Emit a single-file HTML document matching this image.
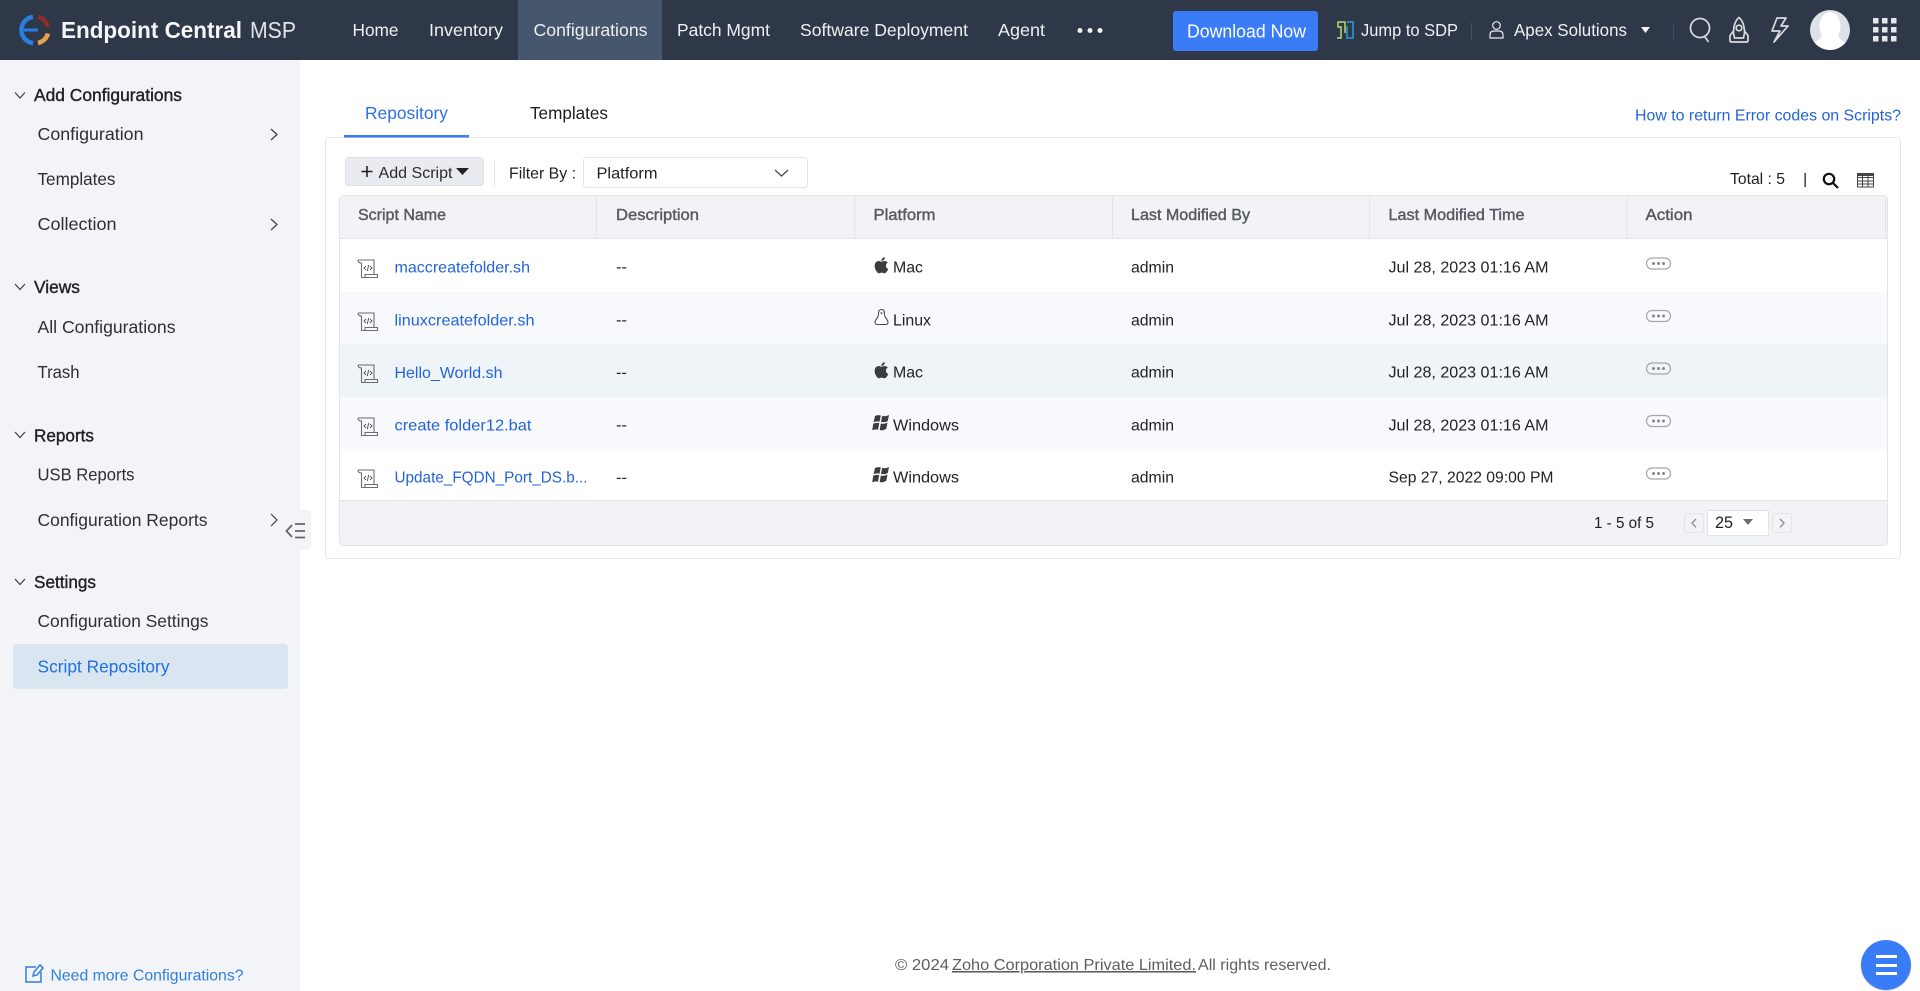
<!DOCTYPE html>
<html lang="en"><head><meta charset="utf-8"><title>Script Repository - Endpoint Central MSP</title>
<style>
html,body{margin:0;padding:0;background:#fff;overflow:hidden}
svg{display:block}
text{font-family:"Liberation Sans",Arial,sans-serif;white-space:pre}
.n{font-size:17.5px;fill:#eef0f3}
.h{font-size:17.5px;fill:#1f2227;stroke:#1f2227;stroke-width:.4px}
.s{font-size:17.5px;fill:#2c2f35}
.t{font-size:15.8px;fill:#222}
.l{font-size:15.8px;fill:#2463d8}
.c{font-size:15.8px;fill:#555a62;stroke:#555a62;stroke-width:.4px}
</style></head><body>
<svg xmlns="http://www.w3.org/2000/svg" width="1920" height="991" viewBox="0 0 1920 991">
<rect width="1920" height="991" fill="#fff"/>
<!-- header -->
<rect width="1920" height="60" fill="#2e3848"/>
<rect x="518" width="144" height="60" fill="#46566c"/>
<g fill="none" stroke-width="4.5">
<path d="M33 16.9A13.2 13.2 0 0 0 33 43.1" stroke="#2a7de1"/>
<path d="M38 17A13.2 13.2 0 0 1 48 27" stroke="#8f2c26"/>
<path d="M48 33.500A13.2 13.2 0 0 1 38 43" stroke="#e3a24e"/>
<path d="M24 30H38" stroke="#2a7de1" stroke-width="3"/>
</g>
<text x="61" y="38" font-size="23" font-weight="700" fill="#f5f6f8" textLength="181" lengthAdjust="spacingAndGlyphs">Endpoint Central</text>
<text x="250" y="38" font-size="23" fill="#e3e5e9" textLength="46" lengthAdjust="spacingAndGlyphs">MSP</text>
<text class="n" x="352.500" y="36" textLength="46" lengthAdjust="spacingAndGlyphs">Home</text>
<text class="n" x="429" y="36" textLength="74" lengthAdjust="spacingAndGlyphs">Inventory</text>
<text class="n" x="533.500" y="36" textLength="114" lengthAdjust="spacingAndGlyphs">Configurations</text>
<text class="n" x="677" y="36" textLength="93" lengthAdjust="spacingAndGlyphs">Patch Mgmt</text>
<text class="n" x="800" y="36" textLength="168" lengthAdjust="spacingAndGlyphs">Software Deployment</text>
<text class="n" x="998" y="36" textLength="47" lengthAdjust="spacingAndGlyphs">Agent</text>
<g fill="#f2f3f5"><circle cx="1080" cy="30.500" r="2.500"/><circle cx="1090" cy="30.500" r="2.500"/><circle cx="1100" cy="30.500" r="2.500"/></g>
<rect x="1173" y="11" width="145" height="40" rx="3" fill="#3a7cf6"/>
<text x="1187" y="37.500" font-size="18" fill="#fff" textLength="119" lengthAdjust="spacingAndGlyphs">Download Now</text>
<g fill="none" stroke-width="1.500">
<path d="M1337 38H1341V27H1338V22H1345V33" stroke="#b7dc6a"/>
<path d="M1347 26V38H1353V22H1347" stroke="#2e9be6"/>
</g>
<text class="n" x="1361" y="36" textLength="97" lengthAdjust="spacingAndGlyphs">Jump to SDP</text>
<rect x="1471" y="23" width="1" height="17" fill="#465264"/>
<g fill="none" stroke="#e9ebee" stroke-width="1.200"><circle cx="1496.500" cy="25.500" r="3.800"/><path d="M1490 38V35Q1490 31 1494 31H1499Q1503 31 1503 35V38Z"/></g>
<text class="n" x="1514" y="36" textLength="113" lengthAdjust="spacingAndGlyphs">Apex Solutions</text>
<path d="M1641 27H1650L1645.500 33Z" fill="#f5f6f7"/>
<rect x="1673" y="23" width="1" height="17" fill="#2f506e"/>
<g fill="none" stroke="#d9dbdf" stroke-width="1.700" stroke-linejoin="round">
<circle cx="1700" cy="28" r="9.500"/><path d="M1705 37L1708.500 42"/>
<path d="M1739 17.500C1735 21 1733.500 26 1733.500 33L1734.500 38H1743.500L1744.500 33C1744.500 26 1743 21 1739 17.500Z"/><circle cx="1739" cy="28" r="2.800"/>
<path d="M1733.500 31L1730 35.500V40.500Q1730 42 1731.500 42H1746.500Q1748 42 1748 40.500V35.500L1744.500 31"/>
<path d="M1786 18H1777L1772 31H1780L1774 42L1788 26H1781Z"/>
</g>
<clipPath id="av"><circle cx="1830" cy="30" r="20"/></clipPath>
<circle cx="1830" cy="30" r="20" fill="#dde1e8"/>
<g clip-path="url(#av)" fill="#fff"><ellipse cx="1830" cy="26" rx="10.500" ry="14"/><path d="M1822 33C1822 40 1816 41 1813 43L1816 52H1844L1847 43C1844 41 1838 40 1838 33Z"/></g>
<g fill="#e4e6ea">
<rect x="1873" y="18" width="5.500" height="5.500"/><rect x="1882" y="18" width="5.500" height="5.500"/><rect x="1891" y="18" width="5.500" height="5.500"/>
<rect x="1873" y="27" width="5.500" height="5.500"/><rect x="1882" y="27" width="5.500" height="5.500"/><rect x="1891" y="27" width="5.500" height="5.500"/>
<rect x="1873" y="36" width="5.500" height="5.500"/><rect x="1882" y="36" width="5.500" height="5.500"/><rect x="1891" y="36" width="5.500" height="5.500"/>
</g>
<!-- sidebar -->
<rect y="60" width="300" height="931" fill="#f2f4f8"/>
<rect x="285" y="510" width="26" height="40" rx="4" fill="#f2f4f8"/>
<rect x="13" y="644" width="275" height="45" rx="4" fill="#d9e5f1"/>
<g fill="none" stroke="#3b3e44" stroke-width="1.200">
<path d="M15 92.500L20 98L25 92.500"/><path d="M15 284L20 289.500L25 284"/><path d="M15 432L20 437.500L25 432"/><path d="M15 579L20 584.500L25 579"/>
<path d="M271 129L277 134.500L271 140"/><path d="M271 219L277 224.500L271 230"/><path d="M271 514L277 520L271 526"/>
</g>
<path d="M292 525L286.500 531L292 537M295 524H305M295 531H305M295 537.500H305" fill="none" stroke="#62666d" stroke-width="1.800"/>
<text class="h" x="34" y="101" textLength="148" lengthAdjust="spacingAndGlyphs">Add Configurations</text>
<text class="s" x="37.500" y="140" textLength="106" lengthAdjust="spacingAndGlyphs">Configuration</text>
<text class="s" x="37.500" y="185" textLength="78" lengthAdjust="spacingAndGlyphs">Templates</text>
<text class="s" x="37.500" y="230" textLength="79" lengthAdjust="spacingAndGlyphs">Collection</text>
<text class="h" x="34" y="293" textLength="46" lengthAdjust="spacingAndGlyphs">Views</text>
<text class="s" x="37.500" y="333" textLength="138" lengthAdjust="spacingAndGlyphs">All Configurations</text>
<text class="s" x="37.500" y="378" textLength="42" lengthAdjust="spacingAndGlyphs">Trash</text>
<text class="h" x="34" y="441.500" textLength="60" lengthAdjust="spacingAndGlyphs">Reports</text>
<text class="s" x="37.500" y="480.500" textLength="97" lengthAdjust="spacingAndGlyphs">USB Reports</text>
<text class="s" x="37.500" y="526" textLength="170" lengthAdjust="spacingAndGlyphs">Configuration Reports</text>
<text class="h" x="34" y="588" textLength="62" lengthAdjust="spacingAndGlyphs">Settings</text>
<text class="s" x="37.500" y="627" textLength="171" lengthAdjust="spacingAndGlyphs">Configuration Settings</text>
<text class="s" x="37.500" y="672.500" style="fill:#1f6fe0" textLength="132" lengthAdjust="spacingAndGlyphs">Script Repository</text>
<g fill="none" stroke="#2f7ee0" stroke-width="1.500"><path d="M36 967H26V982H41V972"/><path d="M33 976L34 972L40 965L43 968L37 975Z"/></g>
<text x="50.500" y="980.500" font-size="15.800" fill="#2f7ee0" textLength="193" lengthAdjust="spacingAndGlyphs">Need more Configurations?</text>
<!-- tabs -->
<text x="365" y="119" font-size="17.500" fill="#2f6fe4" textLength="83" lengthAdjust="spacingAndGlyphs">Repository</text>
<text x="530" y="119" font-size="17.500" fill="#1c1e22" textLength="78" lengthAdjust="spacingAndGlyphs">Templates</text>
<text x="1635" y="120.500" font-size="15.800" fill="#2463d8" textLength="266" lengthAdjust="spacingAndGlyphs">How to return Error codes on Scripts?</text>
<!-- panel -->
<rect x="325.500" y="137.500" width="1575" height="421" rx="4" fill="#fff" stroke="#e4e6ea"/>
<rect x="344" y="135" width="125" height="2.500" fill="#3a7cf6"/>
<rect x="345.500" y="157.500" width="138" height="28" rx="3" fill="#e9ebf0" stroke="#dfe1e6"/>
<path d="M367 166V177M361.500 171.500H372.500" stroke="#222" stroke-width="1.600" fill="none"/>
<text x="378.500" y="178" font-size="15.800" fill="#2a2c30" textLength="74" lengthAdjust="spacingAndGlyphs">Add Script</text>
<path d="M456 168H469L462.500 175Z" fill="#222"/>
<rect x="494" y="161" width="1" height="25" fill="#e1e3e7"/>
<text x="509" y="178.500" font-size="15.800" fill="#222" textLength="67" lengthAdjust="spacingAndGlyphs">Filter By :</text>
<rect x="583.500" y="157.500" width="224" height="30" rx="3" fill="#fff" stroke="#e1e4e9"/>
<text x="596.500" y="178.500" font-size="15.800" fill="#222" textLength="61" lengthAdjust="spacingAndGlyphs">Platform</text>
<path d="M775 170L781.500 176L788 170" fill="none" stroke="#444" stroke-width="1.200"/>
<text x="1730" y="184" font-size="15.800" fill="#222" textLength="55" lengthAdjust="spacingAndGlyphs">Total : 5</text>
<rect x="1804.500" y="173" width="1.300" height="14" fill="#222"/>
<g fill="none" stroke="#111" stroke-width="2.200"><circle cx="1829" cy="179" r="5.200"/><path d="M1833 183L1838 188"/></g>
<g fill="none" stroke="#444" stroke-width="1"><rect x="1857.500" y="173.500" width="16" height="13.500"/><path d="M1857.500 177.500H1873.500M1857.500 181H1873.500M1857.500 184H1873.500M1862.500 174V187M1868 174V187" /></g>
<rect x="1857.500" y="173.500" width="16" height="2.500" fill="#444"/>
<!-- table -->
<rect x="339.500" y="195.500" width="1548" height="350" rx="4" fill="#fff" stroke="#e2e4e8"/>
<path d="M340 199.500Q340 196 344 196H1884Q1887 196 1887 199.500V238H340Z" fill="#f1f3f7"/>
<rect x="340" y="238" width="1547" height="1" fill="#e2e4e8"/>
<g fill="#e2e4e8"><rect x="596" y="196" width="1" height="42"/><rect x="854.500" y="196" width="1" height="42"/><rect x="1112" y="196" width="1" height="42"/><rect x="1369" y="196" width="1" height="42"/><rect x="1626.500" y="196" width="1" height="42"/><rect x="1885" y="196" width="1" height="42"/></g>
<rect x="340" y="292" width="1547" height="52" fill="#f7f9fc"/>
<rect x="340" y="344" width="1547" height="53" fill="#eff4f8"/>
<rect x="340" y="397" width="1547" height="52" fill="#f7f9fc"/>
<path d="M340 501H1887V541Q1887 545 1883 545H344Q340 545 340 541Z" fill="#f1f3f7"/>
<rect x="340" y="500" width="1547" height="1" fill="#e0e2e6"/>
<text class="c" x="358" y="220" textLength="88" lengthAdjust="spacingAndGlyphs">Script Name</text>
<text class="c" x="616" y="220" textLength="83" lengthAdjust="spacingAndGlyphs">Description</text>
<text class="c" x="873.500" y="220" textLength="62" lengthAdjust="spacingAndGlyphs">Platform</text>
<text class="c" x="1131" y="220" textLength="119" lengthAdjust="spacingAndGlyphs">Last Modified By</text>
<text class="c" x="1388.500" y="220" textLength="136" lengthAdjust="spacingAndGlyphs">Last Modified Time</text>
<text class="c" x="1645.500" y="220" textLength="47" lengthAdjust="spacingAndGlyphs">Action</text>
<!-- script icons -->
<g fill="none" stroke="#6a6d72" stroke-width="1.100">
<g transform="translate(0,0)"><path d="M358 260H374V274M358 260Q358 263 361.500 263V277.500H377.500V274.500H365V277.500"/><path d="M366 266L364 268L366 270M370 266L372 268L370 270M368.600 265L367.400 271" stroke="#333" stroke-width=".8"/></g>
<g transform="translate(0,53)"><path d="M358 260H374V274M358 260Q358 263 361.500 263V277.500H377.500V274.500H365V277.500"/><path d="M366 266L364 268L366 270M370 266L372 268L370 270M368.600 265L367.400 271" stroke="#333" stroke-width=".8"/></g>
<g transform="translate(0,105)"><path d="M358 260H374V274M358 260Q358 263 361.500 263V277.500H377.500V274.500H365V277.500"/><path d="M366 266L364 268L366 270M370 266L372 268L370 270M368.600 265L367.400 271" stroke="#333" stroke-width=".8"/></g>
<g transform="translate(0,158)"><path d="M358 260H374V274M358 260Q358 263 361.500 263V277.500H377.500V274.500H365V277.500"/><path d="M366 266L364 268L366 270M370 266L372 268L370 270M368.600 265L367.400 271" stroke="#333" stroke-width=".8"/></g>
<g transform="translate(0,210)"><path d="M358 260H374V274M358 260Q358 263 361.500 263V277.500H377.500V274.500H365V277.500"/><path d="M366 266L364 268L366 270M370 266L372 268L370 270M368.600 265L367.400 271" stroke="#333" stroke-width=".8"/></g>
</g>
<text class="l" x="394.500" y="272.500" textLength="135.500" lengthAdjust="spacingAndGlyphs">maccreatefolder.sh</text>
<text class="l" x="394.500" y="325.500" textLength="140" lengthAdjust="spacingAndGlyphs">linuxcreatefolder.sh</text>
<text class="l" x="394.500" y="378" textLength="108" lengthAdjust="spacingAndGlyphs">Hello_World.sh</text>
<text class="l" x="394.500" y="430.500" textLength="137" lengthAdjust="spacingAndGlyphs">create folder12.bat</text>
<text class="l" x="394.500" y="482.500" textLength="193" lengthAdjust="spacingAndGlyphs">Update_FQDN_Port_DS.b...</text>
<g class="t"><text class="t" x="616" y="272" textLength="11" lengthAdjust="spacingAndGlyphs">--</text><text class="t" x="616" y="325" textLength="11" lengthAdjust="spacingAndGlyphs">--</text><text class="t" x="616" y="377.500" textLength="11" lengthAdjust="spacingAndGlyphs">--</text><text class="t" x="616" y="430" textLength="11" lengthAdjust="spacingAndGlyphs">--</text><text class="t" x="616" y="482.500" textLength="11" lengthAdjust="spacingAndGlyphs">--</text></g>
<!-- platform icons -->
<g fill="#3a3c40">
<path transform="translate(874.500,256) scale(.036)" d="M318.700 268.700c-.2-36.700 16.400-64.400 50-84.800-18.800-26.900-47.200-41.700-84.700-44.600-35.500-2.800-74.300 20.700-88.500 20.700-15 0-49.400-19.700-76.400-19.700C63.300 141.200 4 184.800 4 273.500q0 39.300 14.400 81.200c12.800 36.700 59 126.700 107.200 125.200 25.200-.6 43-17.900 75.800-17.900 31.800 0 48.300 17.900 76.400 17.900 48.600-.7 90.400-82.500 102.600-119.300-65.200-30.700-61.700-90-61.700-91.900zm-56.600-164.200c27.300-32.400 24.800-61.900 24-72.500-24.100 1.400-52 16.400-67.900 34.900-17.500 19.800-27.800 44.300-25.600 71.900 26.100 2 49.900-11.400 69.500-34.300z"/>
<path transform="translate(874.500,361) scale(.036)" d="M318.700 268.700c-.2-36.700 16.400-64.400 50-84.800-18.800-26.900-47.200-41.700-84.700-44.600-35.500-2.800-74.300 20.700-88.500 20.700-15 0-49.400-19.700-76.400-19.700C63.300 141.200 4 184.800 4 273.500q0 39.300 14.400 81.200c12.800 36.700 59 126.700 107.200 125.200 25.200-.6 43-17.900 75.800-17.900 31.800 0 48.300 17.900 76.400 17.900 48.600-.7 90.400-82.500 102.600-119.300-65.200-30.700-61.700-90-61.700-91.900zm-56.600-164.200c27.300-32.400 24.800-61.900 24-72.500-24.100 1.400-52 16.400-67.900 34.900-17.500 19.800-27.800 44.300-25.600 71.900 26.100 2 49.900-11.400 69.500-34.300z"/>
<path d="M875 416Q878 414.500 880.800 415.500L879.500 421.800Q876.500 420.800 873.600 422.300ZM882.200 415.700Q885.500 417 889 415L887.800 421Q884.500 423 881 421.900ZM873.300 423.600Q876.300 422.300 879.200 423.200L878 429.800Q875.500 428.800 872.200 430.300ZM880.800 423.500Q884 424.500 887.500 422.500L886.300 428.800Q883 431 879.700 430Z"/>
<path d="M875 468Q878 466.500 880.800 467.500L879.500 473.800Q876.500 472.800 873.600 474.300ZM882.200 467.700Q885.500 469 889 467L887.800 473Q884.500 475 881 473.900ZM873.300 475.600Q876.300 474.300 879.200 475.200L878 481.800Q875.500 480.800 872.200 482.300ZM880.800 475.500Q884 476.500 887.500 474.500L886.300 480.800Q883 483 879.700 482Z"/>
</g>
<path d="M881.500 309.500C878.500 309.500 878.500 312.500 878.500 314.500C878.500 317.500 875 319.500 875 322.500C875 323.500 876 324.500 877 324.500H886C887 324.500 888 323.500 888 322.500C888 319.500 884.500 317.500 884.500 314.500C884.500 312.500 884.500 309.500 881.500 309.500Z" fill="#fff" stroke="#4a4c50" stroke-width="1.100"/>
<path d="M880 312.500H883L881.500 314.500Z" fill="#4a4c50"/>
<text class="t" x="893" y="272.500" textLength="30" lengthAdjust="spacingAndGlyphs">Mac</text>
<text class="t" x="893" y="325.500" textLength="38" lengthAdjust="spacingAndGlyphs">Linux</text>
<text class="t" x="893" y="377.500" textLength="30" lengthAdjust="spacingAndGlyphs">Mac</text>
<text class="t" x="893" y="430.500" textLength="66" lengthAdjust="spacingAndGlyphs">Windows</text>
<text class="t" x="893" y="482.500" textLength="66" lengthAdjust="spacingAndGlyphs">Windows</text>
<text class="t" x="1131" y="272.500" textLength="43" lengthAdjust="spacingAndGlyphs">admin</text>
<text class="t" x="1131" y="325.500" textLength="43" lengthAdjust="spacingAndGlyphs">admin</text>
<text class="t" x="1131" y="377.500" textLength="43" lengthAdjust="spacingAndGlyphs">admin</text>
<text class="t" x="1131" y="430.500" textLength="43" lengthAdjust="spacingAndGlyphs">admin</text>
<text class="t" x="1131" y="482.500" textLength="43" lengthAdjust="spacingAndGlyphs">admin</text>
<text class="t" x="1388.500" y="272.500" textLength="160" lengthAdjust="spacingAndGlyphs">Jul 28, 2023 01:16 AM</text>
<text class="t" x="1388.500" y="325.500" textLength="160" lengthAdjust="spacingAndGlyphs">Jul 28, 2023 01:16 AM</text>
<text class="t" x="1388.500" y="377.500" textLength="160" lengthAdjust="spacingAndGlyphs">Jul 28, 2023 01:16 AM</text>
<text class="t" x="1388.500" y="430.500" textLength="160" lengthAdjust="spacingAndGlyphs">Jul 28, 2023 01:16 AM</text>
<text class="t" x="1388.500" y="482.500" textLength="165" lengthAdjust="spacingAndGlyphs">Sep 27, 2022 09:00 PM</text>
<!-- action pills -->
<g fill="none" stroke="#a3a6ab" stroke-width="1.200"><rect x="1646.500" y="258" width="24" height="11" rx="5.500"/><rect x="1646.500" y="310.500" width="24" height="11" rx="5.500"/><rect x="1646.500" y="363" width="24" height="11" rx="5.500"/><rect x="1646.500" y="415.500" width="24" height="11" rx="5.500"/><rect x="1646.500" y="468" width="24" height="11" rx="5.500"/></g>
<g fill="#85888e">
<circle cx="1653.500" cy="263.500" r="1.500"/><circle cx="1658.500" cy="263.500" r="1.500"/><circle cx="1663.500" cy="263.500" r="1.500"/>
<circle cx="1653.500" cy="316" r="1.500"/><circle cx="1658.500" cy="316" r="1.500"/><circle cx="1663.500" cy="316" r="1.500"/>
<circle cx="1653.500" cy="368.500" r="1.500"/><circle cx="1658.500" cy="368.500" r="1.500"/><circle cx="1663.500" cy="368.500" r="1.500"/>
<circle cx="1653.500" cy="421" r="1.500"/><circle cx="1658.500" cy="421" r="1.500"/><circle cx="1663.500" cy="421" r="1.500"/>
<circle cx="1653.500" cy="473.500" r="1.500"/><circle cx="1658.500" cy="473.500" r="1.500"/><circle cx="1663.500" cy="473.500" r="1.500"/>
</g>
<!-- pagination -->
<text class="t" x="1594" y="528" textLength="60" lengthAdjust="spacingAndGlyphs">1 - 5 of 5</text>
<rect x="1684.500" y="513.500" width="19" height="19" rx="2" fill="#f1f3f7" stroke="#e3e5e9"/>
<path d="M1696 519L1692 523L1696 527.500" fill="none" stroke="#888b90" stroke-width="1.300"/>
<rect x="1707.500" y="510.500" width="61" height="25" fill="#fff" stroke="#dfe2e6"/>
<text x="1715" y="528" font-size="16.500" fill="#222" textLength="18" lengthAdjust="spacingAndGlyphs">25</text>
<path d="M1743 519H1753L1748 525Z" fill="#6b6f76"/>
<rect x="1772.500" y="513.500" width="19" height="19" rx="2" fill="#f1f3f7" stroke="#e3e5e9"/>
<path d="M1780 519L1784 523L1780 527.500" fill="none" stroke="#888b90" stroke-width="1.300"/>
<!-- footer -->
<text x="895" y="970" font-size="15.800" fill="#5b5e63" textLength="54" lengthAdjust="spacingAndGlyphs">© 2024</text>
<text x="952" y="970" font-size="15.800" fill="#5b5e63" text-decoration="underline" textLength="244" lengthAdjust="spacingAndGlyphs">Zoho Corporation Private Limited.</text>
<text x="1198" y="970" font-size="15.800" fill="#5b5e63" textLength="133" lengthAdjust="spacingAndGlyphs">All rights reserved.</text>
<circle cx="1886" cy="965.500" r="25.500" fill="#c4cad6" opacity=".5"/>
<circle cx="1886" cy="965" r="25" fill="#3a7cf6"/>
<g fill="#fff"><rect x="1876" y="955" width="21" height="3"/><rect x="1876" y="964" width="21" height="3"/><rect x="1876" y="972" width="21" height="3"/></g>
</svg>
</body></html>
